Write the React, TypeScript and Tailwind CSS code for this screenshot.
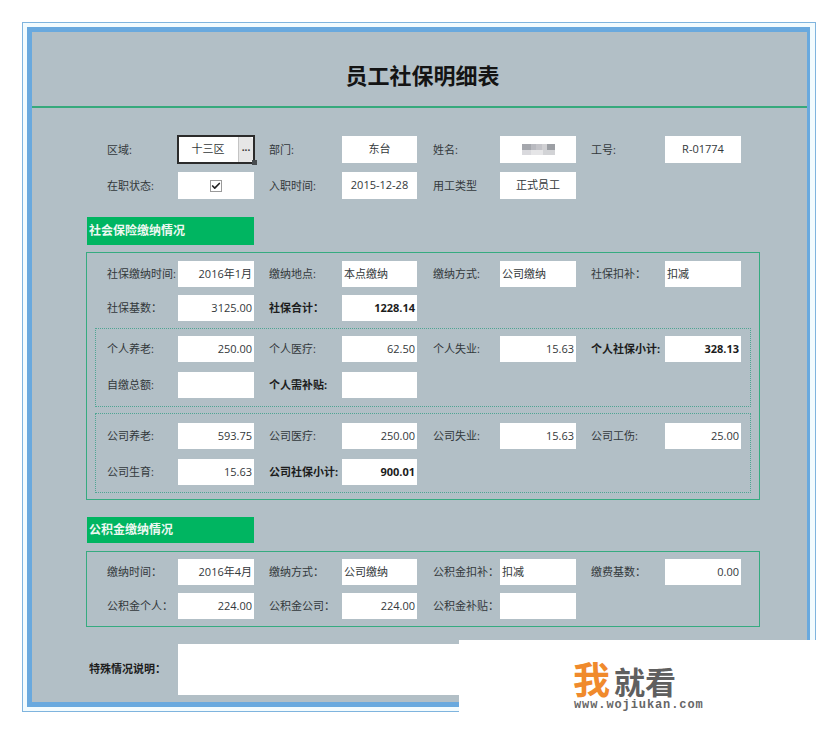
import React from 'react';
import { Check } from 'lucide-react';

type CellData = {
  label: string;
  value?: string;
  bold?: boolean;
  align?: 'left' | 'center' | 'right';
  node?: React.ReactNode;
};

// label column widths, measured from the right edge of the previous field
const labelClasses = ['', 'w-[88px] pl-[15px]', 'w-[83px] pl-[16px]', 'w-[89px] pl-[15px]'];
const fieldClasses = ['w-[76px]', 'w-[75px]', 'w-[76px]', 'w-[76px]'];

const Row = ({ cells, first, height = 'h-[26px]' }: { cells: CellData[]; first: string; height?: string }) => (
  <div className={`flex items-stretch ${height}`}>
    {cells.map((cell, i) => (
      <React.Fragment key={cell.label}>
        <div
          className={`flex shrink-0 items-center whitespace-nowrap pt-[1px] ${i === 0 ? first : labelClasses[i]} ${
            cell.bold ? 'font-bold text-[#1c1c1c]' : 'text-[#33383b]'
          }`}
        >
          {cell.label}
        </div>
        <div
          className={`flex shrink-0 items-center bg-white px-[2px] ${fieldClasses[i]} ${
            cell.align === 'left' ? 'justify-start' : cell.align === 'center' ? 'justify-center' : 'justify-end'
          } ${cell.bold ? 'font-bold text-[#1c1c1c]' : 'text-[#33383b]'}`}
        >
          {cell.node ?? cell.value}
        </div>
      </React.Fragment>
    ))}
  </div>
);

const SectionTitle = ({ text, className }: { text: string; className: string }) => (
  <div className={`ml-[55px] flex w-[167px] items-center bg-[#00b561] pl-[2px] text-[12px] font-bold text-[#eef8f2] ${className}`}>
    {text}
  </div>
);

const RegionSelect = () => (
  <div className="relative -mx-[2px] flex h-full w-[76px] shrink-0 items-center outline-2 -outline-offset-1 outline-[#2b2b2b]">
    <span className="flex-1 pr-[16px] text-center">十三区</span>
    <span className="absolute right-[1px] top-[1px] flex h-[25px] w-[15px] items-center justify-center rounded-r-sm border-l border-[#c4c4c4] bg-[#e6e6e6] text-[10px] font-bold leading-none text-[#333]">
      ···
    </span>
    <span className="absolute -bottom-[2px] -right-[3px] h-[5px] w-[5px] bg-[#474b4e]" />
  </div>
);

const BlurredName = () => (
  <div className="flex h-[11px] w-[33px] flex-col blur-[0.6px]">
    <div className="flex h-[6px]">
      <div className="w-[9px] bg-[#a5a7ad]" />
      <div className="w-[5px] bg-[#b9bac0]" />
      <div className="w-[6px] bg-[#c4c4c9]" />
      <div className="w-[5px] bg-[#d0d0d3]" />
      <div className="w-[8px] bg-[#9c9fa4]" />
    </div>
    <div className="flex h-[5px]">
      <div className="w-[9px] bg-[#d9d9dd]" />
      <div className="w-[12px] bg-[#e5e5e7]" />
      <div className="w-[12px] bg-[#d2d3d6]" />
    </div>
  </div>
);

const CheckMark = () => (
  <div className="flex h-[12px] w-[12px] items-center justify-center border border-[#9a9a9a] bg-white">
    <Check size={10} strokeWidth={4} className="text-[#222]" />
  </div>
);

const App = () => (
  <div className="relative h-[734px] w-[838px] overflow-hidden bg-white font-['Open_Sans','Noto_Sans_CJK_SC',sans-serif] text-[11px]">
    <div className="pl-[22px] pt-[22px]">
      <div className="w-[794px] border border-[#7fb4de] bg-[#f2fbfe] pb-[4px] pl-[4px] pr-[5px] pt-[4px]">
        <div className="border-b-[5px] border-l-[5px] border-r-[3px] border-t-[5px] border-[#69a9de]">
          <div className="h-[670px] bg-[#b2bfc6]">
            <div className="flex h-[76px] items-center justify-center border-b-2 border-[#36a97c] pl-[6px] pt-[10px] font-['Noto_Sans_CJK_SC',sans-serif] text-[22px] font-bold text-[#141414]">
              员工社保明细表
            </div>

            <div className="mt-[28px] flex flex-col gap-[9px]">
              <Row
                first="w-[146px] pl-[75px]"
                height="h-[27px]"
                cells={[
                  { label: '区域:', node: <RegionSelect />, align: 'center' },
                  { label: '部门:', value: '东台', align: 'center' },
                  { label: '姓名:', node: <BlurredName />, align: 'center' },
                  { label: '工号:', value: 'R-01774', align: 'center' },
                ]}
              />
              <Row
                first="w-[146px] pl-[75px]"
                height="h-[27px]"
                cells={[
                  { label: '在职状态:', node: <CheckMark />, align: 'center' },
                  { label: '入职时间:', value: '2015-12-28', align: 'center' },
                  { label: '用工类型', value: '正式员工', align: 'center' },
                ]}
              />
            </div>

            <SectionTitle text="社会保险缴纳情况" className="mt-[18px] h-[28px]" />

            <div className="ml-[54px] mt-[7px] w-[674px] border border-[#36ab80] pb-[6px] pt-[8px]">
              <div className="flex flex-col gap-[8px]">
                <Row
                  first="w-[91px] pl-[20px]"
                  cells={[
                    { label: '社保缴纳时间:', value: '2016年1月' },
                    { label: '缴纳地点:', value: '本点缴纳', align: 'left' },
                    { label: '缴纳方式:', value: '公司缴纳', align: 'left' },
                    { label: '社保扣补：', value: '扣减', align: 'left' },
                  ]}
                />
                <Row
                  first="w-[91px] pl-[20px]"
                  cells={[
                    { label: '社保基数：', value: '3125.00' },
                    { label: '社保合计：', value: '1228.14', bold: true },
                  ]}
                />
              </div>

              <div className="ml-[8px] mt-[7px] flex w-[656px] flex-col gap-[10px] border border-dotted border-[#4fa593] pb-[8px] pt-[7px]">
                <Row
                  first="w-[82px] pl-[11px]"
                  cells={[
                    { label: '个人养老:', value: '250.00' },
                    { label: '个人医疗:', value: '62.50' },
                    { label: '个人失业:', value: '15.63' },
                    { label: '个人社保小计:', value: '328.13', bold: true },
                  ]}
                />
                <Row
                  first="w-[82px] pl-[11px]"
                  cells={[
                    { label: '自缴总额:', value: '' },
                    { label: '个人需补贴:', value: '', bold: true },
                  ]}
                />
              </div>

              <div className="ml-[8px] mt-[6px] flex w-[656px] flex-col gap-[10px] border border-dotted border-[#4fa593] pb-[7px] pt-[9px]">
                <Row
                  first="w-[82px] pl-[11px]"
                  cells={[
                    { label: '公司养老:', value: '593.75' },
                    { label: '公司医疗:', value: '250.00' },
                    { label: '公司失业:', value: '15.63' },
                    { label: '公司工伤:', value: '25.00' },
                  ]}
                />
                <Row
                  first="w-[82px] pl-[11px]"
                  cells={[
                    { label: '公司生育:', value: '15.63' },
                    { label: '公司社保小计:', value: '900.01', bold: true },
                  ]}
                />
              </div>
            </div>

            <SectionTitle text="公积金缴纳情况" className="mt-[17px] h-[26px]" />

            <div className="ml-[54px] mt-[8px] flex w-[674px] flex-col gap-[8px] border border-[#36ab80] pb-[7px] pt-[7px]">
              <Row
                first="w-[91px] pl-[20px]"
                cells={[
                  { label: '缴纳时间：', value: '2016年4月' },
                  { label: '缴纳方式：', value: '公司缴纳', align: 'left' },
                  { label: '公积金扣补：', value: '扣减', align: 'left' },
                  { label: '缴费基数：', value: '0.00' },
                ]}
              />
              <Row
                first="w-[91px] pl-[20px]"
                cells={[
                  { label: '公积金个人：', value: '224.00' },
                  { label: '公积金公司：', value: '224.00' },
                  { label: '公积金补贴：', value: '' },
                ]}
              />
            </div>

            <div className="mt-[17px] flex h-[51px] items-stretch">
              <div className="flex w-[146px] items-center pl-[57px] font-bold text-[#1c1c1c]">特殊情况说明：</div>
              <div className="w-[320px] bg-white" />
            </div>
          </div>
        </div>
      </div>
    </div>

    {/* watermark sits on top of the form's lower right corner */}
    <div className="absolute left-[459px] top-[640px] h-[94px] w-[379px] bg-white">
      <div className="absolute left-[114px] top-[20px] flex h-[37px] items-end font-['Noto_Sans_CJK_SC',sans-serif] font-bold leading-none">
        <span className="text-[37px] leading-[37px] text-[#f08a2c]">我</span>
        <span className="ml-[4px] text-[31px] leading-[33px] text-[#5f5f5f]">就看</span>
      </div>
      <div className="absolute left-[115px] top-[59px] whitespace-nowrap font-['Liberation_Mono',monospace] text-[12px] font-bold leading-none tracking-[0.9px] text-[#666]">
        www.wojiukan.com
      </div>
    </div>
  </div>
);

export default App;
